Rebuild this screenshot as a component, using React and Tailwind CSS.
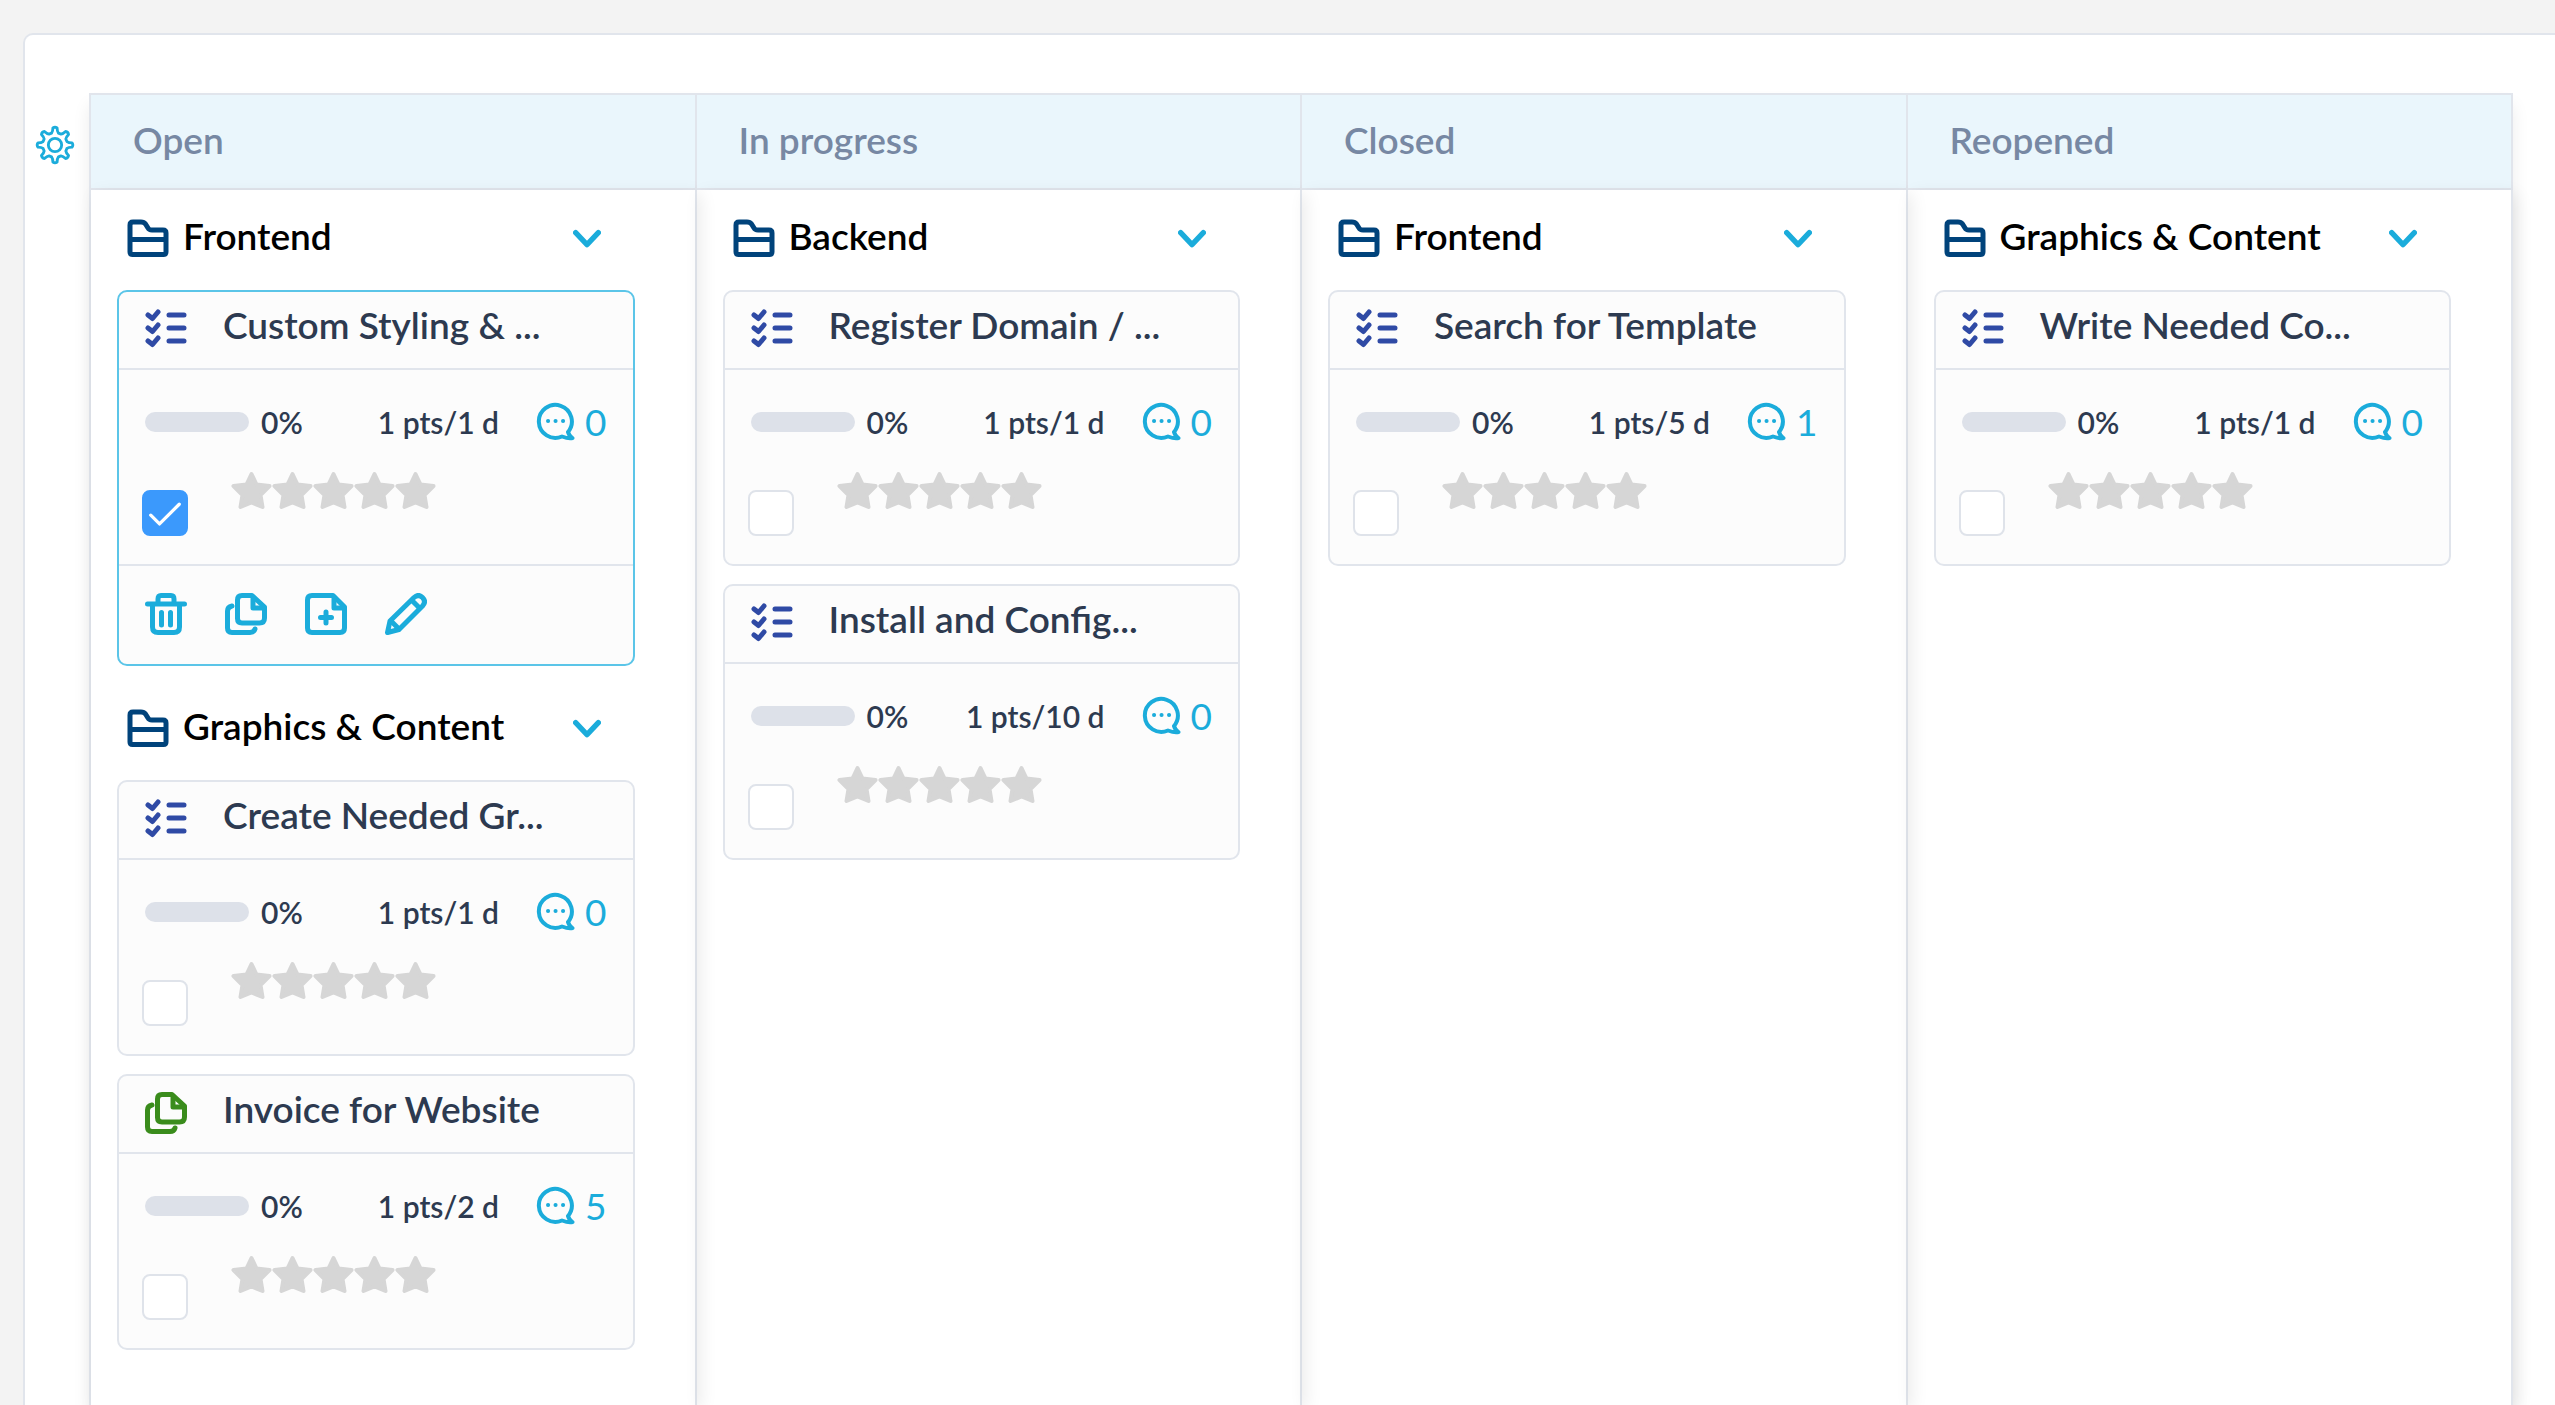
import { useState } from "react";

const COLUMNS = [
    {
        title: "Open",
        groups: [
            {
                name: "Frontend",
                cards: [{ id: 1, title: "Custom Styling & ...", effort: "1 pts/1 d", comments: 0 }],
            },
            {
                name: "Graphics & Content",
                cards: [
                    { id: 2, title: "Create Needed Gr...", effort: "1 pts/1 d", comments: 0 },
                    { id: 3, title: "Invoice for Website", effort: "1 pts/2 d", comments: 5, type: "doc" },
                ],
            },
        ],
    },
    {
        title: "In progress",
        groups: [
            {
                name: "Backend",
                cards: [
                    { id: 4, title: "Register Domain / ...", effort: "1 pts/1 d", comments: 0 },
                    { id: 5, title: "Install and Config...", effort: "1 pts/10 d", comments: 0 },
                ],
            },
        ],
    },
    {
        title: "Closed",
        groups: [
            {
                name: "Frontend",
                cards: [{ id: 6, title: "Search for Template", effort: "1 pts/5 d", comments: 1 }],
            },
        ],
    },
    {
        title: "Reopened",
        groups: [
            {
                name: "Graphics & Content",
                cards: [{ id: 7, title: "Write Needed Co...", effort: "1 pts/1 d", comments: 0 }],
            },
        ],
    },
];

/* ── Icons ── */
function Icon({ className, width = 5, children }) {
    return (
        <svg
            viewBox="0 0 42 42"
            className={className}
            fill="none"
            stroke="currentColor"
            strokeWidth={width}
            strokeLinecap="round"
            strokeLinejoin="round"
            aria-hidden="true"
        >
            {children}
        </svg>
    );
}

function GearIcon() {
    const teeth = [0, 45, 90, 135, 180, 225, 270, 315];
    const p = (r, deg) => {
        const a = ((deg - 90) * Math.PI) / 180;
        return `${(21 + r * Math.cos(a)).toFixed(1)} ${(21 + r * Math.sin(a)).toFixed(1)}`;
    };
    const d = teeth
        .map((t, i) => `${i ? "L" : "M"}${p(13, t - 16)} Q${p(14.5, t - 9)} ${p(18, t - 7)} Q${p(19.5, t)} ${p(18, t + 7)} Q${p(14.5, t + 9)} ${p(13, t + 16)}`)
        .join(" ");
    return (
        <Icon className="size-10" width={3}>
            <path d={`${d}Z`} />
            <circle cx="21" cy="21" r="7" />
        </Icon>
    );
}

function FolderIcon() {
    return (
        <Icon className="size-[42px] text-[#00437b]">
            <path d="M3 35V8Q3 5 6 5H14Q17 5 18.500 7L21 11Q22 13 25 13H36Q39 13 39 16V35Q39 37.500 36.500 37.500H5.500Q3 37.500 3 35Z M3 22.500H39" />
        </Icon>
    );
}

function ChecklistIcon() {
    return (
        <Icon className="size-[42px] shrink-0 text-[#2f4aa5]">
            <path d="M3 7L7.500 10.500L13 4M3 20L7.500 23.500L13 17M3 33L7.500 36.500L13 30" />
            <path d="M24 7H39M24 20H39M24 33H39" />
        </Icon>
    );
}

function CopyIcon({ className }) {
    return (
        <Icon className={className}>
            <path d="M17 2.500H27L39.500 14V25Q39.500 30 34.500 30H17Q12.500 30 12.500 25.500V7Q12.500 2.500 17 2.500Z" />
            <path d="M28 4V15H39" />
            <path d="M7 13Q2.500 14 2.500 18V35Q2.500 39.500 7 39.500H25Q29 39.500 30 36" />
        </Icon>
    );
}

function TrashIcon() {
    return (
        <Icon className="size-[42px]">
            <path d="M2.500 11H39.500M7.500 11V34Q7.500 39.500 13 39.500H29Q34.500 39.500 34.500 34V11M13 11V6Q13 2.500 16 2.500H26Q29 2.500 29 6V11M16.500 19.500V32M25.500 19.500V32" />
        </Icon>
    );
}

function AddFileIcon() {
    return (
        <Icon className="size-[42px]">
            <path d="M7 2.500H28L39.500 14V35Q39.500 39.500 35 39.500H7Q2.500 39.500 2.500 35V7Q2.500 2.500 7 2.500Z" />
            <path d="M29 4V15H39M21 19V30M15.500 24.500H26.500" />
        </Icon>
    );
}

function PencilIcon() {
    return (
        <Icon className="size-[42px]">
            <path d="M2.500 39.500L5 28L29 4.500Q33.500 0.500 37.500 4.500Q41.500 8.500 37.500 13L14 36.500Z" />
            <path d="M27 7.500L34.500 15M6 28L14 36" />
        </Icon>
    );
}

function CommentIcon() {
    return (
        <Icon className="size-[42px]" width={4}>
            <path d="M33 31A16.500 16.500 0 1 0 27 35.500C31 37 34 38 37.500 37C35 36 34 34 33 31Z" />
            <path d="M13 20H13.100M20.500 20H20.600M28 20H28.100" />
        </Icon>
    );
}

function Star() {
    return (
        <svg viewBox="0 0 41 41" className="size-[41px] text-[#d6d6d6]" fill="currentColor" stroke="currentColor" strokeWidth="4" strokeLinejoin="round" aria-hidden="true">
            <path d="M20.500 4L25.500 14.500L38.500 16L29.500 25L31.500 37L20.500 32.500L9.500 37L11.500 25L2.500 16L15.500 14.500Z" />
        </svg>
    );
}

/* ── Card ── */
function Card({ card, selected, onToggle }) {
    return (
        <article className={`mb-[18px] rounded-[10px] border-2 bg-[#fcfcfc] ${selected ? "border-[#5bc5e8]" : "border-[#e1e5ec]"}`}>
            <header className="flex h-[78px] items-center gap-9 border-b-2 border-[#e1e5ec] pb-[2px] pl-[26px]">
                {card.type === "doc" ? <CopyIcon className="size-[42px] shrink-0 text-[#3a8c1c]" /> : <ChecklistIcon />}
                <h3 className="pb-2 text-[37px] whitespace-nowrap font-semibold text-[#2d3a50]">{card.title}</h3>
            </header>

            <div className="h-[194px] px-[26px] pt-7">
                <div className="flex h-12 items-center text-[30px] font-semibold text-[#2d3a50]">
                    <div className="mr-3 h-5 w-[104px] rounded-full bg-[#dde1e9]" />
                    <span>0%</span>
                    <span className="ml-auto">{card.effort}</span>
                    <button className="ml-9 flex items-center gap-2 text-[37px] font-normal text-[#1bacdb]" aria-label="Comments">
                        <CommentIcon />
                        {card.comments}
                    </button>
                </div>
                <div className="mt-6 -ml-[3px] flex gap-[43px]">
                    <label className="relative mt-5 size-[46px]">
                        <input
                            type="checkbox"
                            checked={selected}
                            onChange={onToggle}
                            aria-label={card.title}
                            className="block size-[46px] appearance-none rounded-lg border-2 border-[#dfe3ea] bg-white checked:border-[#3b99fc] checked:bg-[#3b99fc]"
                        />
                        {selected && (
                            <Icon className="pointer-events-none absolute inset-0 size-[46px] text-white" width={3}>
                                <path d="M8 23L16 31L34 13" />
                            </Icon>
                        )}
                    </label>
                    <div className="flex">
                        {[1, 2, 3, 4, 5].map((n) => <Star key={n} />)}
                    </div>
                </div>
            </div>

            {selected && (
                <footer className="flex h-[100px] items-center gap-[38px] border-t-2 border-[#e1e5ec] pb-[2px] pl-[26px] text-[#1bacdb]">
                    <button aria-label="Delete"><TrashIcon /></button>
                    <button aria-label="Copy"><CopyIcon className="size-[42px]" /></button>
                    <button aria-label="Add"><AddFileIcon /></button>
                    <button aria-label="Edit"><PencilIcon /></button>
                </footer>
            )}
        </article>
    );
}

function Group({ group, selectedId, onSelect }) {
    const [open, setOpen] = useState(true);
    return (
        <section>
            <div className="flex h-24 items-center gap-[14px] pr-[34px] pb-2 pl-[10px]">
                <FolderIcon />
                <h2 className="pb-1 text-[37px] font-semibold text-black">{group.name}</h2>
                <button onClick={() => setOpen(!open)} className="ml-auto text-[#1bacdb]" aria-label="Toggle group">
                    <Icon className="h-7 w-7" width={8}>
                        <path d="M4 13L21 31L38 13" />
                    </Icon>
                </button>
            </div>
            {open && group.cards.map((card) => (
                <Card
                    key={card.id}
                    card={card}
                    selected={card.id === selectedId}
                    onToggle={() => onSelect(card.id === selectedId ? null : card.id)}
                />
            ))}
        </section>
    );
}

/* ── Board ── */
export default function App() {
    const [selectedId, setSelectedId] = useState(1);

    return (
        <div className="flex h-screen flex-col overflow-hidden bg-[#f3f3f3] pt-[33px] pl-[23px] font-[Lato,sans-serif]">
            <main className="flex grow rounded-tl-[10px] border-t-2 border-l-2 border-[#e1e5ec] bg-white pt-[58px] pr-[42px]">
                <div className="w-16 shrink-0 pt-8 pl-[10px]">
                    <button className="text-[#1bacdb]" aria-label="Board settings"><GearIcon /></button>
                </div>
                <div className="flex min-w-0 flex-1 border-l-2 border-[#e1e5ec] shadow-[0_12px_16px_rgba(0,0,0,0.08)]">
                    {COLUMNS.map((col) => (
                        <div key={col.title} className="flex min-w-0 flex-1 flex-col">
                            <h1 className="flex h-[97px] shrink-0 items-center border-y-2 border-r-2 border-[#e1e5ec] bg-[#eaf6fc] pb-1 pl-[42px] text-[37px] font-semibold text-[#7788a3]">
                                {col.title}
                            </h1>
                            <div className="grow border-r-2 border-[#e1e5ec] pt-1 pr-[60px] pl-[26px] shadow-[4px_4px_16px_rgba(0,0,0,0.08)]">
                                {col.groups.map((g) => (
                                    <Group key={g.name} group={g} selectedId={selectedId} onSelect={setSelectedId} />
                                ))}
                            </div>
                        </div>
                    ))}
                </div>
            </main>
        </div>
    );
}
